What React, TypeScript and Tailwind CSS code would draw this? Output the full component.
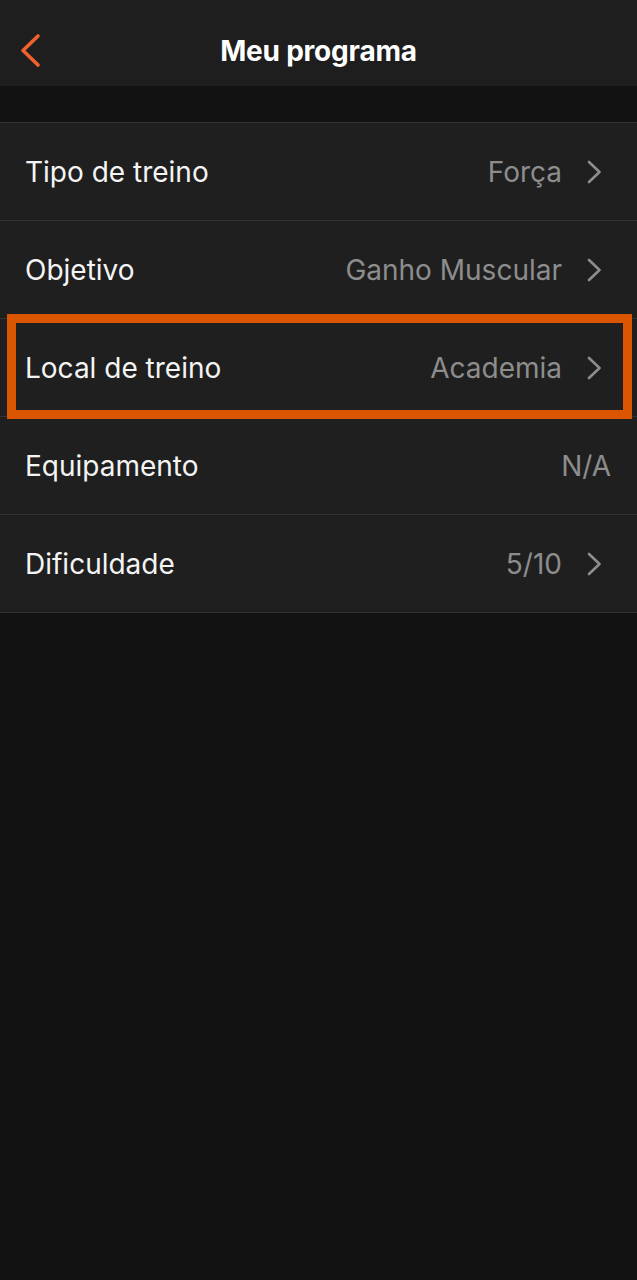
interface Setting {
    label: string
    value: string
    arrow: boolean
    highlighted?: boolean
}

const settings: Setting[] = [
    { label: "Tipo de treino", value: "Força", arrow: true },
    { label: "Objetivo", value: "Ganho Muscular", arrow: true },
    { label: "Local de treino", value: "Academia", arrow: true, highlighted: true },
    { label: "Equipamento", value: "N/A", arrow: false },
    { label: "Dificuldade", value: "5/10", arrow: true },
]

export default function App() {
    return (
        <div
            className="min-h-[1280px] w-full bg-[#121212] text-white"
            style={{ fontFamily: "Inter, 'Noto Sans', sans-serif" }}
        >
            {/* Header */}
            <header className="relative flex h-[86px] items-center justify-center bg-[#1e1e1e] pt-[15px]">
                <button className="absolute left-[19px] top-[33px] text-[#f0612d]">
                    <svg width="22" height="35" viewBox="0 0 22 35" fill="none">
                        <path d="M19 3L4 17.5L19 32" stroke="currentColor" strokeWidth="3.6" strokeLinecap="round" strokeLinejoin="round" />
                    </svg>
                </button>
                <h1 className="text-[28px] font-bold tracking-[-0.2px]">Meu programa</h1>
            </header>

            <div className="h-[36px]" />

            {/* Settings list */}
            <div className="border-t border-[#333333] bg-[#1f1f1f]">
                {settings.map(setting => (
                    <div
                        key={setting.label}
                        className="relative flex h-[98px] items-center border-b border-[#333333] pl-[25px] pr-[26px]"
                    >
                        <span className="text-[28px] text-[#f4f4f4]">{setting.label}</span>
                        <span className="ml-auto text-[28px] text-[#8d8d8d]">{setting.value}</span>
                        {setting.arrow && (
                            <svg className="ml-[25px] mr-[10px] text-[#8d8d8d]" width="14" height="24" viewBox="0 0 14 24" fill="none">
                                <path d="M2 2L12.5 12L2 22" stroke="currentColor" strokeWidth="2.6" strokeLinecap="round" strokeLinejoin="round" />
                            </svg>
                        )}

                        {/* Highlight annotation */}
                        {setting.highlighted && (
                            <div className="pointer-events-none absolute -top-[5px] left-[7px] right-[5px] -bottom-[3px] border-[9px] border-[#db5500]" />
                        )}
                    </div>
                ))}
            </div>
        </div>
    )
}
